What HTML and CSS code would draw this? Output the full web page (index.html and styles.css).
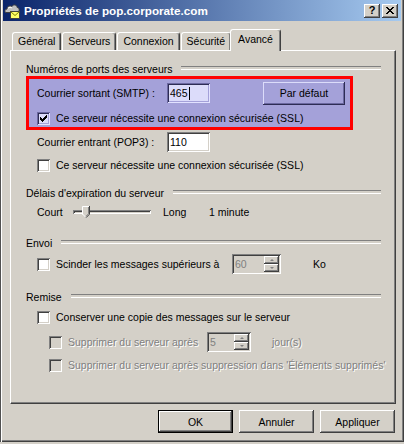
FILE: index.html
```html
<!DOCTYPE html>
<html lang="fr">
<head>
<meta charset="utf-8">
<title>Propriétés de pop.corporate.com</title>
<link rel="stylesheet" href="styles.css">
</head>
<body>
<div class="window">
  <div class="titlebar">
    <svg class="app-icon" width="16" height="16" viewBox="0 0 16 16">
      <path d="M2 9.5 C0.5 9.5 0.5 6 3 6 C3 3 6 2.5 8 3.5 C9 1 13 1.5 13.2 4.5 C15.5 4.5 15.8 8 14 9.5 Z" fill="#c0c0c0" stroke="#404040" stroke-width="1"/>
      <path d="M4 5.5 C5 4 7 4 8 5" fill="none" stroke="#ffffff" stroke-width="1"/>
      <rect x="6.5" y="8.5" width="9" height="7" fill="#ffff66" stroke="#404040" stroke-width="1"/>
      <path d="M6.5 8.5 L11 12.5 L15.5 8.5" fill="none" stroke="#808000" stroke-width="1"/>
    </svg>
    <span class="title">Propriétés de pop.corporate.com</span>
    <div class="caption-btns">
      <span class="cap-btn cap-help">?</span>
      <span class="cap-btn cap-close">
        <svg width="8" height="7" viewBox="0 0 8 7" shape-rendering="crispEdges">
          <path d="M0 0h2v1h-2z M6 0h2v1h-2z M1 1h2v1h-2z M5 1h2v1h-2z M2 2h4v1h-4z M3 3h2v1h-2z M2 4h4v1h-4z M1 5h2v1h-2z M5 5h2v1h-2z M0 6h2v1h-2z M6 6h2v1h-2z" fill="#000"/>
        </svg>
      </span>
    </div>
  </div>

  <div class="tabs">
    <div class="tab">Général</div>
    <div class="tab">Serveurs</div>
    <div class="tab">Connexion</div>
    <div class="tab">Sécurité</div>
    <div class="tab active">Avancé</div>
  </div>

  <div class="panel">
    <div class="group-head">Numéros de ports des serveurs</div>

    <div class="hl">
      <div class="row row-field">
        <span class="field-label">Courrier sortant (SMTP) :</span>
        <span class="textbox">465<span class="caret"></span></span>
        <button class="btn btn-port">Par défaut</button>
      </div>
      <div class="row row-check gap-6">
        <span class="check">
          <svg width="7" height="7" viewBox="0 0 7 7" shape-rendering="crispEdges"><path d="M6 0h1v3h-1z M5 1h1v3h-1z M4 2h1v3h-1z M3 3h1v3h-1z M2 4h1v3h-1z M1 3h1v3h-1z M0 2h1v3h-1z" fill="#000"/></svg>
        </span>
        <span>Ce serveur nécessite une connexion sécurisée (SSL)</span>
      </div>
    </div>

    <div class="row row-field gap-2">
      <span class="field-label">Courrier entrant (POP3) :</span>
      <span class="textbox">110</span>
    </div>
    <div class="row row-check gap-6">
      <span class="check"></span>
      <span>Ce serveur nécessite une connexion sécurisée (SSL)</span>
    </div>

    <div class="group-head gap-14">Délais d'expiration du serveur</div>
    <div class="row row-slider gap-4">
      <span class="slider-label">Court</span>
      <span class="track"><span class="thumb">
        <svg width="8" height="12" viewBox="0 0 8 12">
          <polygon points="0,0 8,0 8,8 4,12 0,8" fill="#d4d0c8"/>
          <polyline points="0.5,8.5 0.5,0.5 7,0.5" fill="none" stroke="#ffffff" stroke-width="1"/>
          <polyline points="0.5,8 4,11.5" fill="none" stroke="#ffffff" stroke-width="1"/>
          <polyline points="7.5,0 7.5,8.2 4,11.7" fill="none" stroke="#404040" stroke-width="1"/>
          <polyline points="6.5,1 6.5,7.8 4,10.3" fill="none" stroke="#808080" stroke-width="1"/>
        </svg>
      </span></span>
      <span class="slider-long">Long</span>
      <span>1 minute</span>
    </div>

    <div class="group-head gap-16">Envoi</div>
    <div class="row row-field gap-4">
      <span class="check"></span>
      <span class="split-label">Scinder les messages supérieurs à</span>
      <span class="spin spin-60">
        <span class="spin-val">60</span>
        <span class="spin-btns"><span class="spin-btn up"></span><span class="spin-btn down"></span></span>
      </span>
      <span class="unit-ko">Ko</span>
    </div>

    <div class="group-head gap-16">Remise</div>
    <div class="row row-check gap-6">
      <span class="check"></span>
      <span>Conserver une copie des messages sur le serveur</span>
    </div>
    <div class="row row-field sub gap-8 disabled">
      <span class="check"></span>
      <span class="del-label">Supprimer du serveur après</span>
      <span class="spin spin-5">
        <span class="spin-val">5</span>
        <span class="spin-btns"><span class="spin-btn up"></span><span class="spin-btn down"></span></span>
      </span>
      <span class="unit-days">jour(s)</span>
    </div>
    <div class="row row-check sub gap-6 disabled">
      <span class="check"></span>
      <span>Supprimer du serveur après suppression dans 'Éléments supprimés'</span>
    </div>
  </div>

  <div class="buttons">
    <button class="btn btn-default">OK</button>
    <button class="btn">Annuler</button>
    <button class="btn">Appliquer</button>
  </div>
</div>
</body>
</html>
```

FILE: styles.css
```css
* { box-sizing: border-box; }

html, body { margin: 0; padding: 0; }

body {
  width: 404px;
  height: 444px;
  overflow: hidden;
  background: #d4d0c8;
  font-family: "Liberation Sans", Arial, sans-serif;
  font-size: 10.5px;
  color: #000;
}

.window {
  width: 404px;
  height: 442px;
  padding: 0 3px 3px 3px;
  background: #d4d0c8;
  display: flex;
  flex-direction: column;
  box-shadow: inset 1px 0 0 #505050, inset 2px 0 0 #ffffff,
              inset -1px -1px 0 #404040, inset -2px -2px 0 #808080;
}

/* ---------- title bar ---------- */
.titlebar {
  height: 21px;
  flex: none;
  display: flex;
  align-items: center;
  padding: 0 3px 0 1px;
  background: linear-gradient(to right, #0a246a, #a6caf0);
  color: #fff;
}

.app-icon { flex: none; display: block; }

.title {
  margin-left: 4px;
  font-weight: bold;
  font-size: 11.7px;
  white-space: nowrap;
}

.caption-btns {
  margin-left: auto;
  display: flex;
  gap: 2px;
}

.cap-btn {
  width: 16px;
  height: 14px;
  display: flex;
  align-items: center;
  justify-content: center;
  background: #d4d0c8;
  color: #000;
  box-shadow: inset -1px -1px 0 #404040, inset 1px 1px 0 #ffffff,
              inset -2px -2px 0 #808080;
}

.cap-help {
  font-weight: bold;
  font-size: 11px;
  line-height: 14px;
  padding-bottom: 1px;
}

.cap-close svg { display: block; margin-top: 0; }

/* ---------- tabs ---------- */
.tabs {
  height: 29px;
  flex: none;
  display: flex;
  align-items: flex-end;
  padding-left: 9px;
}

.tab {
  height: 18px;
  line-height: 17px;
  padding: 0 5px;
  margin-right: 1px;
  border: 1px solid #404040;
  border-color: #ffffff #404040 transparent #ffffff;
  border-bottom: none;
  border-radius: 3px 3px 0 0;
  box-shadow: inset -1px 0 0 #808080;
  background: #d4d0c8;
  white-space: nowrap;
}

.tab.active {
  height: 22px;
  line-height: 19px;
  padding: 0 7px;
  margin: 0 -1px -1px -2px;
  position: relative;
  z-index: 1;
}

/* ---------- panel ---------- */
.panel {
  flex: none;
  margin-left: 7px;
  width: 386px;
  height: 354px;
  border: 1px solid;
  border-color: #ffffff #404040 #404040 #ffffff;
  box-shadow: inset -1px -1px 0 #808080;
  padding: 11px 14px 0 15px;
  display: flex;
  flex-direction: column;
}

.group-head {
  height: 14px;
  flex: none;
  display: flex;
  align-items: center;
  white-space: nowrap;
}

.group-head::after {
  content: "";
  flex: 1;
  height: 2px;
  margin-left: 9px;
  margin-bottom: 3px;
  border-top: 1px solid #808080;
  border-bottom: 1px solid #ffffff;
}

.gap-2 { margin-top: 2px; }
.gap-4 { margin-top: 4px; }
.gap-6 { margin-top: 6px; }
.gap-8 { margin-top: 8px; }
.gap-14 { margin-top: 14px; }
.gap-16 { margin-top: 16px; }

.row {
  flex: none;
  display: flex;
  align-items: center;
  padding-left: 11px;
  white-space: nowrap;
}

.row.sub { padding-left: 23px; }

.row-field { height: 20px; }
.row-check { height: 14px; }
.row-slider { height: 16px; }

.field-label { width: 130px; }

.textbox {
  width: 43px;
  height: 20px;
  line-height: 20px;
  padding-left: 3px;
  background: #fff;
  box-shadow: inset 1px 1px 0 #808080, inset -1px -1px 0 #ffffff,
              inset 2px 2px 0 #404040, inset -2px -2px 0 #d4d0c8;
  display: flex;
  align-items: center;
}

.caret {
  display: inline-block;
  width: 1px;
  height: 13px;
  background: #000;
  margin-left: 1px;
}

.check {
  flex: none;
  width: 13px;
  height: 13px;
  margin-right: 6px;
  background: #fff;
  box-shadow: inset 1px 1px 0 #808080, inset -1px -1px 0 #ffffff,
              inset 2px 2px 0 #404040, inset -2px -2px 0 #d4d0c8;
}

.check svg { display: block; margin: 3px; }

.disabled { color: #808080; text-shadow: 1px 1px 0 #ffffff; }
.disabled .check { background: #d4d0c8; }

/* ---------- buttons ---------- */
.btn {
  font-family: "Liberation Sans", Arial, sans-serif;
  font-size: 10.5px;
  color: #000;
  width: 75px;
  height: 23px;
  padding: 0;
  border: none;
  background: #d4d0c8;
  box-shadow: inset -1px -1px 0 #404040, inset 1px 1px 0 #ffffff,
              inset -2px -2px 0 #808080;
}

.btn-default {
  border: 1px solid #000;
}

.buttons {
  flex: none;
  margin-top: 6px;
  padding-right: 6px;
  display: flex;
  justify-content: flex-end;
  gap: 6px;
}

/* ---------- highlight box ---------- */
.hl {
  flex: none;
  width: 327px;
  border: 3px solid #ff0000;
  background: #a4a1d9;
  padding: 2px 5px 2px 8px;
}

.hl .row { padding-left: 0; }
.hl .row-field { height: 24px; }

.hl .textbox {
  background: #dcdcfa;
  box-shadow: inset 1px 1px 0 #6b68a0, inset -1px -1px 0 #e2e2ff,
              inset 2px 2px 0 #2e2d55, inset -2px -2px 0 #a4a1d9;
}

.hl .check {
  background: #dcdcfa;
  box-shadow: inset 1px 1px 0 #6b68a0, inset -1px -1px 0 #e2e2ff,
              inset 2px 2px 0 #2e2d55, inset -2px -2px 0 #a4a1d9;
}

.btn-port {
  margin-left: auto;
  width: 82px;
  height: 23px;
  background: #a4a1d9;
  box-shadow: inset -1px -1px 0 #2e2d55, inset 1px 1px 0 #dcdcfa,
              inset -2px -2px 0 #6b68a0;
}

/* ---------- slider ---------- */
.slider-label { width: 36px; }

.track {
  position: relative;
  width: 78px;
  height: 4px;
  box-shadow: inset 1px 1px 0 #808080, inset -1px -1px 0 #ffffff,
              inset 2px 2px 0 #404040, inset -2px -2px 0 #d4d0c8;
}

.thumb {
  position: absolute;
  left: 9px;
  top: -4px;
}

.thumb svg { display: block; }

.slider-long { margin-left: 12px; width: 46px; }

/* ---------- spinners ---------- */
.split-label { width: 176px; }
.del-label { width: 139px; }

.spin {
  flex: none;
  height: 20px;
  display: flex;
  padding: 2px;
  background: #d4d0c8;
  box-shadow: inset 1px 1px 0 #808080, inset -1px -1px 0 #ffffff,
              inset 2px 2px 0 #404040, inset -2px -2px 0 #d4d0c8;
  text-shadow: none;
}

.spin-60 { width: 49px; }
.spin-5 { width: 44px; }

.spin-val {
  flex: 1;
  padding-left: 1px;
  line-height: 16px;
  color: #808080;
}

.spin-btns {
  width: 15px;
  display: flex;
  flex-direction: column;
}

.spin-btn {
  flex: 1;
  display: flex;
  align-items: center;
  justify-content: center;
  background: #d4d0c8;
  box-shadow: inset -1px -1px 0 #404040, inset 1px 1px 0 #ffffff,
              inset -2px -2px 0 #808080;
}

.spin-btn::before {
  content: "";
  width: 0;
  height: 0;
  border-left: 2px solid transparent;
  border-right: 2px solid transparent;
}

.spin-btn.up::before { border-bottom: 2px solid #808080; }
.spin-btn.down::before { border-top: 2px solid #808080; }

.unit-ko { margin-left: 32px; }
.unit-days { margin-left: 21px; }
```
